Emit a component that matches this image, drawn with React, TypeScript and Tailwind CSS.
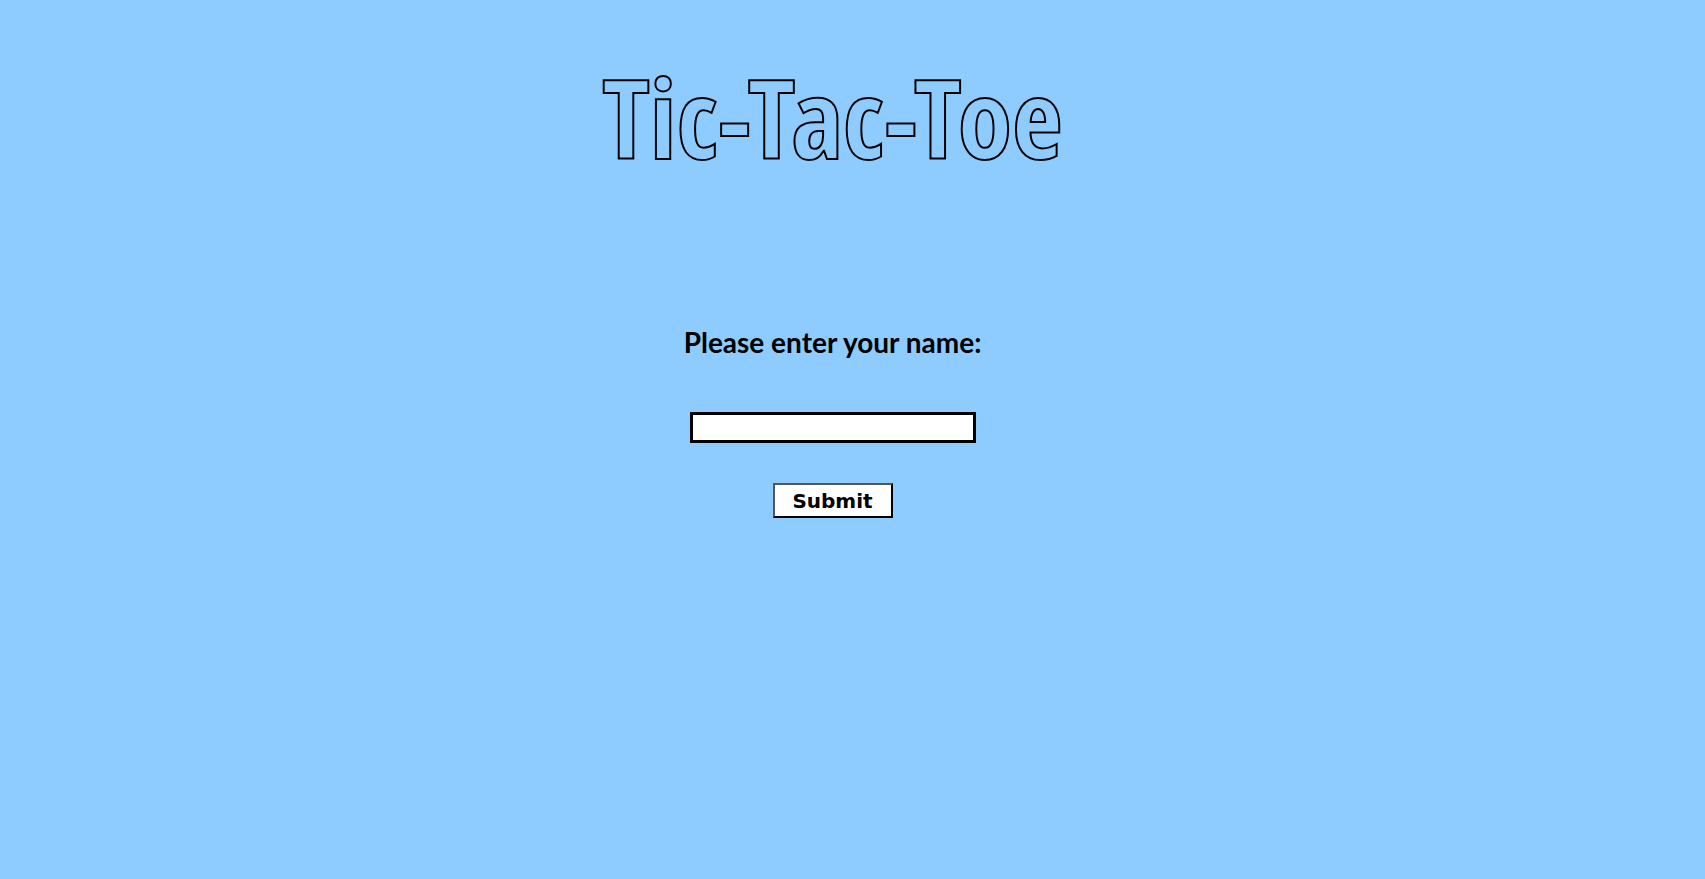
export default function App() {
  return (
    <main className="flex min-h-screen flex-col items-center bg-[#8ecbff] pr-10 text-black">
      <h1 className="mt-13 text-[110px] leading-[128px] font-bold whitespace-nowrap text-transparent [-webkit-text-stroke:2px_black] [font-family:'Open_Sans_Condensed','Open_Sans',sans-serif]">
        Tic-Tac-Toe
      </h1>
      <form
        className="mt-[142px] flex flex-col items-center"
        onSubmit={(event) => event.preventDefault()}
      >
        <label
          htmlFor="player-name"
          className="text-[28px] leading-10 font-bold whitespace-nowrap [font-family:Lato,sans-serif]"
        >
          Please enter your name:
        </label>
        <input
          id="player-name"
          type="text"
          className="mt-[50px] h-[31px] w-[286px] border-3 border-black bg-white px-1 text-base outline-none"
        />
        <button
          type="submit"
          className="mt-10 h-[35px] w-[120px] border-2 border-t-[#555] border-r-black border-b-black border-l-[#555] bg-white text-xl leading-none font-bold [font-family:'DejaVu_Sans',sans-serif]"
        >
          Submit
        </button>
      </form>
    </main>
  );
}
